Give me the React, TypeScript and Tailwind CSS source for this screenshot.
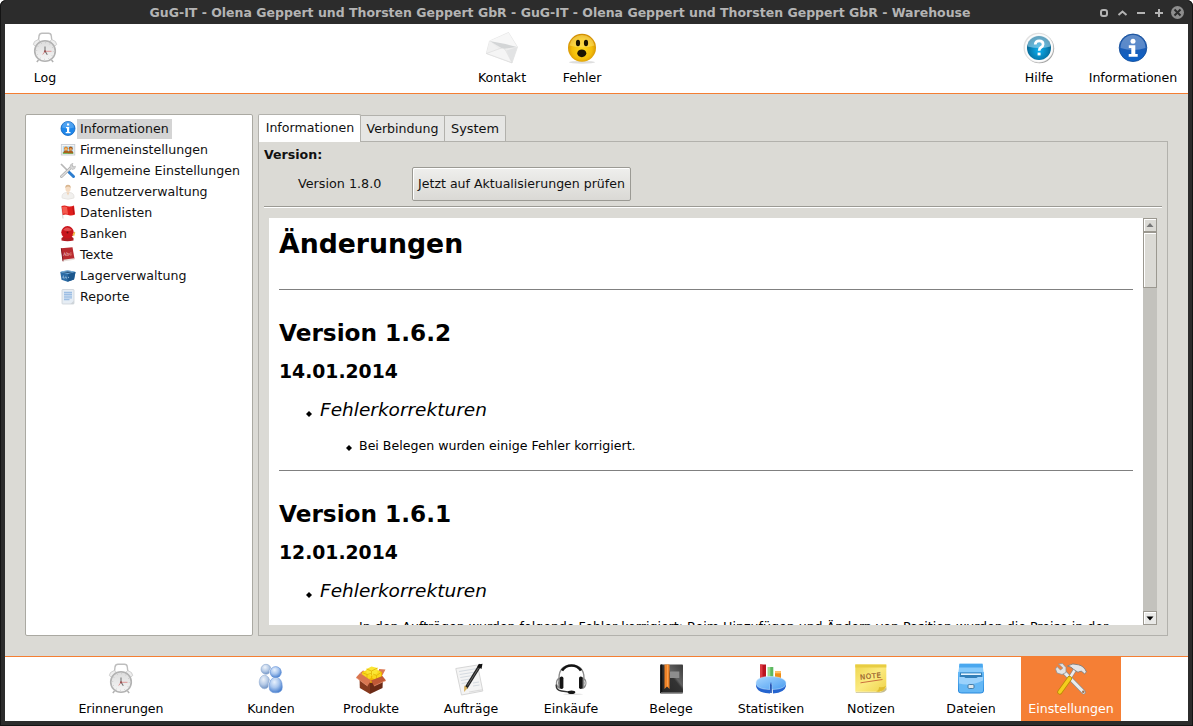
import type { ReactNode } from "react";

/* ---------- large 32px icons ---------- */

function Big({ children }: { children: ReactNode }) {
  return (
    <svg width="32" height="34" viewBox="0 0 32 34" fill="none" className="shrink-0">
      {children}
    </svg>
  );
}

function ClockIcon({ id }: { id: string }) {
  return (
    <Big>
      <defs>
        <linearGradient id={id} x1="0" y1="0" x2="0" y2="1">
          <stop offset="0" stopColor="#dcdcdc" />
          <stop offset="1" stopColor="#f6f6f6" />
        </linearGradient>
      </defs>
      <path d="M9.500 8.500 10 4q.5-2.700 3-2.700h6.500q2.500 0 2.800 2.700l.5 4.500" stroke="#bdbdbd" strokeWidth="1.400" />
      <path d="M4.300 12.500q0-3.500 5-5l2 2-5 4.500zM27.700 12.500q0-3.500-5-5l-2 2 5 4.500z" fill="#eee" stroke="#c6c6c6" strokeWidth=".8" />
      <path d="M9.500 28 7.800 30M22.500 28l1.700 2" stroke="#b2b2b2" strokeWidth="1.500" />
      <circle cx="16" cy="19" r="10.300" fill={`url(#${id})`} stroke="#b2b2b2" strokeWidth="1.600" />
      <circle cx="16" cy="19" r="8.300" stroke="#b4b4b4" strokeWidth=".7" strokeDasharray=".8 3.550" />
      <path d="M16 19V14.500M16 19l2.300 3.700" stroke="#757575" strokeWidth="1.100" />
      <path d="M13.700 22.500 16 19.300h6.500" stroke="#dd9494" strokeWidth="1" />
      <circle cx="16" cy="19.300" r="1.100" fill="#955050" />
    </Big>
  );
}

function MailIcon() {
  return (
    <Big>
      <path d="M22.500.5 31.500 15 26 31 .3 21.500 3.500 9z" fill="#ededed" stroke="#dcdcdc" strokeWidth=".6" />
      <path d="M3.500 9 22.500.8 31.200 15 17 17z" fill="#f7f7f7" />
      <path d="M3.500 9 17 17 31 15 19.500 12z" fill="#d3d5d6" />
      <path d="M3.500 9 13.500 17.500.5 21.500z" fill="#f1f1f1" />
      <path d="M31.400 15 20.500 18.500 26 30.700z" fill="#e2e3e4" />
      <path d="M.5 21.500 14 16.500q3-1.500 5.500 1.500L26 30.700z" fill="#f5f5f5" stroke="#dadada" strokeWidth=".6" />
    </Big>
  );
}

function SmileyIcon() {
  return (
    <Big>
      <defs>
        <radialGradient id="smiley" cx=".5" cy=".55" r=".55">
          <stop offset="0" stopColor="#ffd91c" />
          <stop offset=".65" stopColor="#f3bd0a" />
          <stop offset="1" stopColor="#cf8a02" />
        </radialGradient>
      </defs>
      <ellipse cx="16" cy="30.300" rx="13" ry="1.400" fill="#dedede" />
      <circle cx="16" cy="15.800" r="14" fill="url(#smiley)" />
      <path d="M3.500 13.500a12.600 12 0 0 1 25 0q-12 4-25 0z" fill="#ffe873" opacity=".5" />
      <ellipse cx="12" cy="11" rx="2.100" ry="3.200" fill="#1b1500" />
      <ellipse cx="20" cy="11" rx="2.100" ry="3.200" fill="#1b1500" />
      <ellipse cx="15.800" cy="21.300" rx="4.500" ry="3.900" fill="#1c1402" />
    </Big>
  );
}

function HelpIcon() {
  return (
    <Big>
      <defs>
        <radialGradient id="help" cx=".5" cy=".6" r=".6">
          <stop offset="0" stopColor="#0bb0f0" />
          <stop offset=".6" stopColor="#087fb4" />
          <stop offset="1" stopColor="#075a80" />
        </radialGradient>
      </defs>
      <circle cx="16.500" cy="16.600" r="14.700" fill="#a5a5a5" />
      <circle cx="15.500" cy="15.700" r="15" fill="#e1e1e1" />
      <circle cx="15.900" cy="16" r="14" fill="#fcfcfc" />
      <circle cx="16" cy="16" r="12" fill="url(#help)" />
      <path d="M4.500 14.500a11.500 11 0 0 1 23 0q-11 3-23 0z" fill="#bfe6f5" opacity=".5" />
      <path d="M12.200 12.500q.3-3.600 4-3.600 3.900 0 3.900 3.300 0 2-2.200 3.300-1.700 1-1.700 3.300" stroke="#fff" strokeWidth="2.700" />
      <rect x="14.600" y="20.600" width="3" height="2.800" fill="#fff" />
    </Big>
  );
}

function InfoIcon() {
  return (
    <Big>
      <defs>
        <linearGradient id="info" x1="0" y1="0" x2="0" y2="1">
          <stop offset="0" stopColor="#2c63ae" />
          <stop offset=".5" stopColor="#1b5cb5" />
          <stop offset="1" stopColor="#0b62c9" />
        </linearGradient>
      </defs>
      <circle cx="16" cy="15.800" r="13.800" fill="url(#info)" stroke="#0d4796" strokeWidth=".8" />
      <path d="M3.500 16a12.500 13 0 0 1 25 0q-12 4-25 0z" fill="#bcd3ee" opacity=".38" />
      <circle cx="16" cy="9.300" r="2.500" fill="#fff" />
      <path d="M11.800 13.300h6.500v8.700h2.400v2.800h-9v-2.800h2.600v-6h-2.500z" fill="#fff" />
    </Big>
  );
}

function PeopleIcon() {
  return (
    <Big>
      <defs>
        <radialGradient id="people" cx=".4" cy=".3" r=".8">
          <stop offset="0" stopColor="#e8f1fd" />
          <stop offset=".45" stopColor="#a9c6ee" />
          <stop offset="1" stopColor="#2f6cc5" />
        </radialGradient>
        <radialGradient id="people-back" cx=".4" cy=".3" r=".8">
          <stop offset="0" stopColor="#eef3fa" />
          <stop offset=".5" stopColor="#b5cae6" />
          <stop offset="1" stopColor="#5b82ba" />
        </radialGradient>
      </defs>
      <ellipse cx="9.500" cy="19" rx="5.300" ry="6.800" fill="url(#people-back)" stroke="#93aed3" strokeWidth=".6" />
      <circle cx="11" cy="6.300" r="5" fill="url(#people-back)" stroke="#8aa6cd" strokeWidth=".6" />
      <path d="M14.200 24q0-9.500 6.500-9.500t6.600 9.500q0 5.800-6.600 5.800T14.200 24z" fill="url(#people)" stroke="#fff" strokeWidth="1.600" />
      <path d="M14.200 24q0-9.500 6.500-9.500t6.600 9.500q0 5.800-6.600 5.800T14.200 24z" fill="url(#people)" stroke="#6c97d8" strokeWidth=".6" />
      <circle cx="20.700" cy="9.200" r="5.600" fill="url(#people)" stroke="#fff" strokeWidth="1.600" />
      <circle cx="20.700" cy="9.200" r="5.600" fill="url(#people)" stroke="#5d8dd6" strokeWidth=".6" />
    </Big>
  );
}

function BoxIcon() {
  return (
    <Big>
      <path d="M4.500 14 15 19v12L4.800 25z" fill="#86391d" />
      <path d="M15 19 28 14.500l-.5 10.500L15 31z" fill="#6b2a16" />
      <path d="M5 10 8 7.500l1.500.5L8 12zM24 6l6.500.5-3.500 6.500-3-2.500z" fill="#dd7a54" />
      <path d="m9 11 7-5 11 3v6l-11 5-9-5z" fill="#f0b400" />
      <path d="m7 9 5-2 4 3v5l-4 2-5-3zM18 10l5-3 3 2v5l-5 3-4-2z" fill="#f9d71c" />
      <path d="m11.500 6 5-2.500 6 1.500v5l-6 3-5-2.500z" fill="#fbe634" />
      <path d="m11.500 6 5 2 6-3M16.500 8v4.500M7 9.500l5 2 4-1M12 11.500V16M18 11l3.500 1.500L26 9.500M21.500 12.500V16" stroke="#dfb408" strokeWidth=".8" />
      <path d="M1 14.500 5 10l11 7.500-3.500 5.500z" fill="#d97650" />
      <path d="M16 17.500 27.500 13l3.500 4.500L19 23z" fill="#c05836" />
      <path d="m1 14.500 11.500 8.500M31 17.500 19 23" stroke="#eb9a7a" strokeWidth=".7" />
    </Big>
  );
}

function OrderIcon() {
  return (
    <Big>
      <path d="M.8 5.500 22.500 2l5.300 26-21.300 4z" fill="#f4f4f4" stroke="#d6d6d6" strokeWidth="1" />
      <path d="m4 8.500 17-2.800M4.700 11.500l15-2.400M5.300 14.500l13.500-2.200M6 17.500l11-1.800M6.600 20.500l8-1.300M18 20l6-1M18 23l6.500-1" stroke="#d5dbe1" strokeWidth="1" />
      <path d="m14 29 13-2.200" stroke="#dcdcdc" strokeWidth="1.200" />
      <path d="m11 25 14.500-23.500" stroke="#222" strokeWidth="3.300" />
      <path d="M23.500 1.500 27.500.8 26.500 6l-4-2.500z" fill="#111" />
      <path d="m12.500 22.500 11-17.500" stroke="#777" strokeWidth=".8" />
      <path d="M9.300 22.500 12.700 25 9 29z" fill="#d8b260" />
    </Big>
  );
}

function HeadsetIcon() {
  return (
    <Big>
      <ellipse cx="18" cy="31.300" rx="10" ry=".8" fill="#e2e2e2" />
      <path d="M4 15C4 6.500 9 2.500 16.500 2.500S29 6.500 29 15" stroke="#8c8c8c" strokeWidth="1.300" />
      <path d="M7 7.500q3.500-5 9.500-5t9.500 5" stroke="#131313" strokeWidth="2.700" />
      <path d="M5.500 14Q1 15 .8 20q.2 5.500 4.700 6zM27 14q4.500 1 4.500 6-.2 5.500-4.500 6z" fill="#8a8a8a" />
      <rect x="4.800" y="13.500" width="3.600" height="12.500" rx="1.700" fill="#151515" />
      <rect x="24" y="13.500" width="3.600" height="12.500" rx="1.700" fill="#151515" />
      <path d="M3 17.500q-1.300 2.500 0 5M29.500 17.500q1.300 2.500 0 5" stroke="#e6e6e6" />
      <path d="M1.200 21.500q-.5 5.800 5.300 6.500l8 1.200" stroke="#333" strokeWidth="1.300" />
      <ellipse cx="16.500" cy="29.200" rx="3.800" ry="1.800" fill="#161616" />
    </Big>
  );
}

function BookIcon() {
  return (
    <Big>
      <defs>
        <linearGradient id="book" x1="0" y1="1" x2="1" y2="0">
          <stop offset="0" stopColor="#252525" />
          <stop offset=".55" stopColor="#333" />
          <stop offset=".62" stopColor="#616161" />
          <stop offset="1" stopColor="#3b3b3b" />
        </linearGradient>
      </defs>
      <rect x="5" y="1.500" width="23" height="29" rx=".8" fill="url(#book)" />
      <path d="M6.500 1.500V30" stroke="#111" strokeWidth="1.500" />
      <path d="M6 29.500h22" stroke="#777" strokeWidth=".8" />
      <rect x="15" y="8.500" width="9.300" height="6.500" fill="#8d8d8d" />
      <path d="M9.500 1.500h5V26L12 23.500 9.500 26z" fill="#ef8328" />
      <path d="M12.500 1.500v22" stroke="#f9a04c" />
    </Big>
  );
}

function StatsIcon() {
  return (
    <Big>
      <defs>
        <linearGradient id="pie" x1="0" y1="0" x2="1" y2="1">
          <stop offset="0" stopColor="#a8d7ff" />
          <stop offset="1" stopColor="#4a9df0" />
        </linearGradient>
      </defs>
      <path d="M5 1.500h6V18H5z" fill="#bb1420" />
      <path d="M5 1.500h2.500V18H5z" fill="#dc3a42" />
      <path d="M12.800 4h5.500v14h-5.500z" fill="#5cb860" />
      <path d="M12.800 4h2.500v14h-2.500z" fill="#9bdd92" />
      <path d="M20 8.300h6V20h-6z" fill="#ef8c16" />
      <path d="M20 8.300h6v2h-6z" fill="#ffc267" />
      <path d="M1 19.500V23q1 7 14 7.500l.5-7zM17.500 24l.5 6.500Q30 29.500 31 23v-3.500z" fill="#2464cf" />
      <path d="M14.800 26.500C6 26.300 1 24 1 20c0-4 5-6.500 14-6.500S31 16 31 20c0 4-5 6.300-14 6.500l-.3-5.500-1.400-.3z" fill="url(#pie)" stroke="#d3ebff" strokeWidth=".5" />
      <path d="m15 21.500 1-2.500.8 3v8h-1.600z" fill="#1d51b4" />
    </Big>
  );
}

function NoteIcon() {
  return (
    <Big>
      <defs>
        <linearGradient id="note" x1="0" y1="0" x2="1" y2="1">
          <stop offset="0" stopColor="#eed64e" />
          <stop offset=".5" stopColor="#fbea80" />
          <stop offset="1" stopColor="#efd34a" />
        </linearGradient>
      </defs>
      <path d="M.5 29h25l6-5v3q-2 2.500-5.500 2.800H1z" fill="#c5bd91" />
      <path d="M.3 1.500h31v22q-2 4.800-7 5.200H.3z" fill="url(#note)" />
      <path d="M.3 1.500h31v3H.3z" fill="#e8cd43" />
      <path d="M21 28.500q3-1 3-4.500 3 1 7-1-2 5-7 5.700z" fill="#dfbd31" />
      <text x="5" y="15.500" fontFamily="DejaVu Sans" fontSize="7" fill="#98602d" stroke="#98602d" strokeWidth=".2" textLength="21" transform="rotate(-6 16 13)">NOTE</text>
      <path d="m5.500 19.800 22-3.300" stroke="#cb713e" strokeWidth="1" />
    </Big>
  );
}

function FilesIcon() {
  return (
    <Big>
      <defs>
        <linearGradient id="files" x1="0" y1="0" x2="0" y2="1">
          <stop offset="0" stopColor="#68bbf8" />
          <stop offset="1" stopColor="#2485da" />
        </linearGradient>
      </defs>
      <path d="M4.500.8h23L29 12H3z" fill="#88cbfb" />
      <path d="M4.500.8h23l.5 3.800H4z" fill="#4aa8ef" />
      <path d="M3 9h26v18.500q0 3-4 3H7q-4 0-4-3z" fill="url(#files)" />
      <path d="M5 9.500h22v6H5z" fill="#337fb8" />
      <path d="M6 11.200h20" stroke="#e7f5ff" strokeWidth="1.600" />
      <path d="M4 14h5l1.500 1h11l1.500-1h5v13.500q0 2-3 2H7q-3 0-3-2z" fill="#65b8f5" />
      <path d="M4 14h5l1.500 1h11l1.500-1h5v3.500q-12 6-24 3z" fill="#b8e1ff" opacity=".65" />
      <rect x="13" y="21.500" width="6" height="4" rx="1.200" fill="#dce6ec" stroke="#39729d" strokeWidth=".9" />
    </Big>
  );
}

function ToolsIcon() {
  return (
    <Big>
      <path d="m8.500 8.500 20 20.500" stroke="#8d8d8d" strokeWidth="4.600" strokeLinecap="round" />
      <path d="m8.500 8.500 20 20.500" stroke="#ececec" strokeWidth="3.200" strokeLinecap="round" />
      <path d="M3.500 1 7.500.5l3.500 4v5l-4 2-5-1.500L.5 6 2 3.500 5.500 7l2.300-2z" fill="#e3e3e3" stroke="#8f8f8f" strokeWidth=".8" />
      <circle cx="28.300" cy="28.800" r="1.300" fill="#a2724e" />
      <path d="m13.500 17 7.500-12" stroke="#8c8c8c" strokeWidth="3.800" />
      <path d="m13.500 17 7.500-12" stroke="#eee" strokeWidth="2.400" />
      <path d="m4.800 29 9.700-13.500" stroke="#b98b04" strokeWidth="5" strokeLinecap="round" />
      <path d="m4.800 29 9.700-13.500" stroke="#f5ce1d" strokeWidth="3.500" strokeLinecap="round" />
      <path d="M12.500 3q5-3.500 11-1.200 5.500 1.200 8 7.200l-2 1.800-3-2.500q-2-.2-3.500 1l-4.500-3q-2-2.500-6-3.300z" fill="#e6e6e6" stroke="#7d7d7d" strokeWidth=".9" />
    </Big>
  );
}

/* ---------- small 16px icons ---------- */

function Small({ children }: { children: ReactNode }) {
  return (
    <svg width="16" height="16" viewBox="0 0 16 16" fill="none" className="shrink-0">
      {children}
    </svg>
  );
}

const smallIcons = {
  info: (
    <Small>
      <circle cx="8" cy="7.500" r="7" fill="#1d86ea" stroke="#1263bb" strokeWidth=".8" />
      <path d="M2 6.500a6 6 0 0 1 12 0q-6 2-12 0z" fill="#7cbcf7" opacity=".5" />
      <path d="M7 2.500h2.200v2H7zM6 6h3.200v5h1.300v1.300H5.700v-1.300H7V7.300H6z" fill="#fff" />
    </Small>
  ),
  company: (
    <Small>
      <rect x="1.300" y="2.500" width="13.500" height="10.500" fill="#f4f4f4" stroke="#c3c8cf" strokeWidth=".8" />
      <path d="M2.800 4h10.500v7.800H2.800z" fill="#b6dcf5" />
      <path d="M2.800 10.300h10.500v1.500H2.800z" fill="#61ad35" />
      <path d="M3.500 11q0-3 2.500-3t2.500 3zM8 11.200q0-3 2.500-3t2.700 3z" fill="#a95e1c" />
      <circle cx="6" cy="6.500" r="2" fill="#d98a34" />
      <circle cx="10.700" cy="6.500" r="2" fill="#a85a1c" />
      <circle cx="6" cy="7.300" r="1.200" fill="#f5b76b" />
      <circle cx="10.700" cy="7.300" r="1.200" fill="#e6a058" />
    </Small>
  ),
  tools: (
    <Small>
      <path d="m1 1 6.500 6.500" stroke="#b7b7b7" strokeWidth="1.700" />
      <path d="m8.800 9 4.700 4.500" stroke="#2d7dcf" strokeWidth="3" strokeLinecap="round" />
      <path d="M1.500 13.500 12 3.500" stroke="#aaa" strokeWidth="2.800" strokeLinecap="round" />
      <path d="M1.500 13.500 12 3.500" stroke="#ddd" strokeWidth="1.500" strokeLinecap="round" />
      <path d="M10 4.500Q9.500 1 13 .3L12 2.500 13 4l2.500-.8q0 3.500-3.500 3.300z" fill="#d8d8d8" stroke="#aaa" strokeWidth=".5" />
    </Small>
  ),
  user: (
    <Small>
      <path d="M2 14q-.5-5 4-5.500h4q4.500.5 4 5.500-6 2.500-12 0z" fill="#f1f0ee" stroke="#e2e0dd" strokeWidth=".7" />
      <path d="m6.500 8.500 1.500 3 1.500-3z" fill="#f0d2b4" />
      <ellipse cx="8" cy="4.500" rx="2.600" ry="3.600" fill="#f5dcc3" />
      <path d="M5.300 4Q5.200.7 8 .7T10.700 4Q9.500 2.200 8 2.400T5.300 4z" fill="#d8b58f" />
    </Small>
  ),
  flag: (
    <Small>
      <path d="m1.700 1.500 1.300 12" stroke="#d0d0d0" strokeWidth="1" />
      <path d="M1.500 1q3.500-1 6 .3 3.500.5 6.500-.8L15 9.500q-3 1.500-6 .8-3-1.500-6.300-.2z" fill="#df1e1c" />
      <path d="M2 2q3-1 5 0l1 7q-3-1-5-.3z" fill="#f45b50" />
      <path d="m13 2 .8 7" stroke="#b91217" strokeWidth="1.200" />
    </Small>
  ),
  bell: (
    <Small>
      <path d="M3 11h9l1.500 1v2.500q-6 1.500-12 0V12z" fill="#b01c22" />
      <circle cx="7.500" cy="6.300" r="6.200" fill="#c9151d" />
      <path d="M3 4q4-5 9 0-4 2-9 0z" fill="#ef6868" opacity=".7" />
      <circle cx="7.500" cy="6.500" r="1" fill="#6f0c10" />
      <path d="m12.500 8.500 2-3 .8 1-1.300 4z" fill="#eebc42" />
    </Small>
  ),
  dictionary: (
    <Small>
      <path d="m1 1.300 11.500-1 2 11.500L3 13.800z" fill="#b82a2f" />
      <path d="m3 12.800 11.300-1.600.3 1.500L3.200 14.500z" fill="#e7e1dc" />
      <path d="m1.300 1.300 1.700 13" stroke="#821b20" strokeWidth="1" />
      <text x="3.300" y="8.500" fontFamily="DejaVu Serif" fontSize="4.500" fill="#f6dcdc" transform="rotate(-6 8 8)">Abc</text>
    </Small>
  ),
  storage: (
    <Small>
      <path d="M.3 4q7-3 15.200 0L14 11.500l-6.500 2.300-6-2z" fill="#2c6ca6" />
      <path d="M.3 4q7-3 15.200 0L8 6z" fill="#7ab3df" />
      <path d="M2.500 4.200q5-1.500 10.500 0L8 5z" fill="#264f77" />
      <path d="m8 6 7.500-2L14 11.500l-6.500 2.300z" fill="#1c578d" />
      <path d="M4 7.700q-1.800.8-.8 2.300h1.500M5.800 8.500v1.500H7M8.500 8.800v1.300" stroke="#c3dcf0" strokeWidth=".7" />
    </Small>
  ),
  report: (
    <Small>
      <rect x="2" y=".5" width="12" height="14.500" rx=".8" fill="#e6edf4" stroke="#ccd2d8" strokeWidth=".8" />
      <path d="M4 3.500h8M4 5.300h8M4 7.100h8M4 8.900h8M4 10.700h5.500" stroke="#9cbee4" strokeWidth="1.300" />
      <path d="m10.500 15 3.300-3.200V15z" fill="#cdd3d8" />
    </Small>
  ),
};

/* ---------- data ---------- */

const navItems = [
  { label: "Informationen", icon: smallIcons.info },
  { label: "Firmeneinstellungen", icon: smallIcons.company },
  { label: "Allgemeine Einstellungen", icon: smallIcons.tools },
  { label: "Benutzerverwaltung", icon: smallIcons.user },
  { label: "Datenlisten", icon: smallIcons.flag },
  { label: "Banken", icon: smallIcons.bell },
  { label: "Texte", icon: smallIcons.dictionary },
  { label: "Lagerverwaltung", icon: smallIcons.storage },
  { label: "Reporte", icon: smallIcons.report },
];

const modules = [
  { label: "Kunden", icon: <PeopleIcon /> },
  { label: "Produkte", icon: <BoxIcon /> },
  { label: "Aufträge", icon: <OrderIcon /> },
  { label: "Einkäufe", icon: <HeadsetIcon /> },
  { label: "Belege", icon: <BookIcon /> },
  { label: "Statistiken", icon: <StatsIcon /> },
  { label: "Notizen", icon: <NoteIcon /> },
  { label: "Dateien", icon: <FilesIcon /> },
  { label: "Einstellungen", icon: <ToolsIcon />, active: true },
];

const releases = [
  { version: "Version 1.6.2", date: "14.01.2014", text: "Bei Belegen wurden einige Fehler korrigiert." },
  {
    version: "Version 1.6.1",
    date: "12.01.2014",
    text: "In den Aufträgen wurden folgende Fehler korrigiert: Beim Hinzufügen und Ändern von Position wurden die Preise in der",
  },
];

/* ---------- parts ---------- */

function ToolButton({ label, icon, className }: { label: string; icon: ReactNode; className: string }) {
  return (
    <button className={`flex h-full flex-col items-center ${className}`}>
      {icon}
      <span className="mt-[4px] h-4 leading-4 whitespace-nowrap">{label}</span>
    </button>
  );
}

function Diamond() {
  return (
    <svg width="6" height="6" viewBox="0 0 6 6" className="shrink-0">
      <path d="M3 0 6 3 3 6 0 3z" fill="#000" />
    </svg>
  );
}

function TitleBar() {
  return (
    <div className="flex h-6 shrink-0 items-center bg-[#2c2c2c] text-[#b4b4b4]">
      <div className="w-[1110px] pt-[2px] pl-[5px] text-center text-[12.5px] leading-[22px] font-bold whitespace-nowrap">
        GuG-IT - Olena Geppert und Thorsten Geppert GbR - GuG-IT - Olena Geppert und Thorsten Geppert GbR - Warehouse
      </div>
      <svg width="94" height="24" viewBox="1094 0 94 24" fill="none" className="-ml-[16px] shrink-0" stroke="#b4b4b4" strokeWidth="2">
        <rect x="1101" y="10" width="6" height="6" rx="2" />
        <path d="m1118.500 15 4-3.500 4 3.500M1137 13h8M1155 13h8M1159 9v8" />
        <circle cx="1177.500" cy="12.500" r="6.500" fill="#8e8e8e" stroke="none" />
        <path d="m1174.500 9.500 6 6M1180.500 9.500l-6 6" stroke="#2c2c2c" />
      </svg>
    </div>
  );
}

function Sidebar() {
  return (
    <nav className="h-[522px] w-[228px] shrink-0 rounded-[2px] border border-[#aaa9a2] bg-white pt-[3px]">
      {navItems.map((item, i) => (
        <div key={item.label} className="flex h-[21px] items-center pl-[34px]">
          {item.icon}
          <span className={`ml-px px-[3px] leading-5 whitespace-nowrap ${i === 0 ? "bg-[#d4d4d4]" : ""}`}>{item.label}</span>
        </div>
      ))}
    </nav>
  );
}

function Changelog() {
  return (
    <div className="h-[407px] w-[874px] overflow-hidden bg-white px-[10px] text-black">
      <h1 className="mt-[10px] h-8 text-[26.7px] leading-8 font-bold whitespace-nowrap">Änderungen</h1>
      <div className="mt-[29px]">
        {releases.map((r) => (
          <section key={r.version} className="h-[181px] border-t border-[#808080] pt-[29px]">
            <h2 className="h-7 text-[23.2px] leading-7 font-bold whitespace-nowrap">{r.version}</h2>
            <h3 className="mt-[13px] h-6 text-[18.8px] leading-6 font-bold whitespace-nowrap">{r.date}</h3>
            <div className="mt-[14px] flex h-6 items-center pl-[27px]">
              <span className="mt-[7px]"><Diamond /></span>
              <em className="ml-[8px] text-[18.5px] leading-6 whitespace-nowrap">Fehlerkorrekturen</em>
            </div>
            <div className="mt-[16px] flex h-4 items-center pl-[67px]">
              <span className="mt-[3px]"><Diamond /></span>
              <span className="ml-[7px] text-[12.58px] leading-4 whitespace-nowrap">{r.text}</span>
            </div>
          </section>
        ))}
      </div>
    </div>
  );
}

function Scrollbar() {
  return (
    <div className="flex h-[407px] w-[14px] flex-col bg-[#c3c2bd]">
      <div className="flex h-[14px] items-center justify-center border border-[#9b9890] bg-[#dbdad5] shadow-[inset_1px_1px_0_#fff]">
        <svg width="8" height="5" viewBox="0 0 8 5"><path d="M4 0 7.500 4h-7z" fill="#777" /></svg>
      </div>
      <div className="h-[56px] border border-[#9b9890] bg-[#dbdad5] shadow-[inset_1px_1px_0_#fff]" />
      <div className="flex-1" />
      <div className="flex h-[14px] items-center justify-center border border-[#9b9890] bg-[#e9e9e7] shadow-[inset_1px_1px_0_#fff]">
        <svg width="8" height="5" viewBox="0 0 8 5"><path d="M4 4.500.5.5h7z" fill="#000" /></svg>
      </div>
    </div>
  );
}

function Content() {
  return (
    <div className="ml-[5px] w-[910px]">
      <div className="flex h-[27px] items-end">
        <div className="z-10 h-[28px] w-[103px] -mb-px rounded-t-[2px] border border-b-0 border-[#b2b1ac] bg-white pl-px text-center leading-[26px] whitespace-nowrap">Informationen</div>
        <div className="h-[26px] w-[84px] border-t border-r border-[#b2b1ac] bg-[#e6e6e4] text-center leading-[26px] whitespace-nowrap">Verbindung</div>
        <div className="h-[26px] w-[61px] rounded-tr-[2px] border-t border-r border-[#b2b1ac] bg-[#e6e6e4] text-center text-[12.9px] leading-[26px] whitespace-nowrap">System</div>
      </div>
      <div className="h-[495px] border border-[#b2b1ac] px-[5px]">
        <div className="pt-[5px] text-[12.6px] leading-4 font-bold">Version:</div>
        <div className="mt-[4px] flex h-[34px] items-center">
          <span className="w-[148px] pl-[34px] text-[12.75px] whitespace-nowrap">Version 1.8.0</span>
          <button className="h-[34px] w-[219px] rounded-[2px] border border-[#9b9a94] bg-gradient-to-b from-[#efefed] to-[#dad9d5] text-[12.55px] whitespace-nowrap shadow-[inset_1px_1px_0_#fff]">
            Jetzt auf Aktualisierungen prüfen
          </button>
        </div>
        <div className="mt-[5px] h-[2px] border-t border-b border-t-[#9b9a94] border-b-white" />
        <div className="mt-[10px] flex pl-[5px]">
          <Changelog />
          <Scrollbar />
        </div>
      </div>
    </div>
  );
}

export default function App() {
  return (
    <div className="h-[726px] w-[1193px] overflow-hidden bg-white font-['DejaVu_Sans',sans-serif] text-[12.6px] text-[#111]">
      <div className="flex h-full flex-col overflow-hidden rounded-t-[6px] bg-[#2c2c2c] px-[5px] pb-[5px] shadow-[inset_0_0_0_1px_#141414]">
        <TitleBar />
        <header className="flex h-[70px] shrink-0 border-b border-[#f47e33] bg-white pt-[8px] text-black">
          <ToolButton label="Log" icon={<ClockIcon id="clock-log" />} className="w-20" />
          <div className="ml-[377px] flex">
            <ToolButton label="Kontakt" icon={<MailIcon />} className="w-20" />
            <ToolButton label="Fehler" icon={<SmileyIcon />} className="w-20" />
          </div>
          <div className="ml-[377px] flex">
            <ToolButton label="Hilfe" icon={<HelpIcon />} className="w-20" />
            <ToolButton label="Informationen" icon={<InfoIcon />} className="w-[108px]" />
          </div>
        </header>
        <main className="flex h-[562px] shrink-0 bg-[#dbdad5] pt-[20px] pl-[20px]">
          <Sidebar />
          <Content />
        </main>
        <footer className="flex h-[65px] shrink-0 border-t border-[#f47e33] bg-white pl-[66px] text-black">
          <ToolButton label="Erinnerungen" icon={<ClockIcon id="clock-reminder" />} className="w-[100px] pt-[6px]" />
          <div className="ml-[50px] flex">
            {modules.map((m) => (
              <ToolButton
                key={m.label}
                label={m.label}
                icon={m.icon}
                className={m.active ? "w-[100px] bg-[#f57f35] pt-[6px] text-white" : "w-[100px] pt-[6px]"}
              />
            ))}
          </div>
        </footer>
      </div>
    </div>
  );
}
